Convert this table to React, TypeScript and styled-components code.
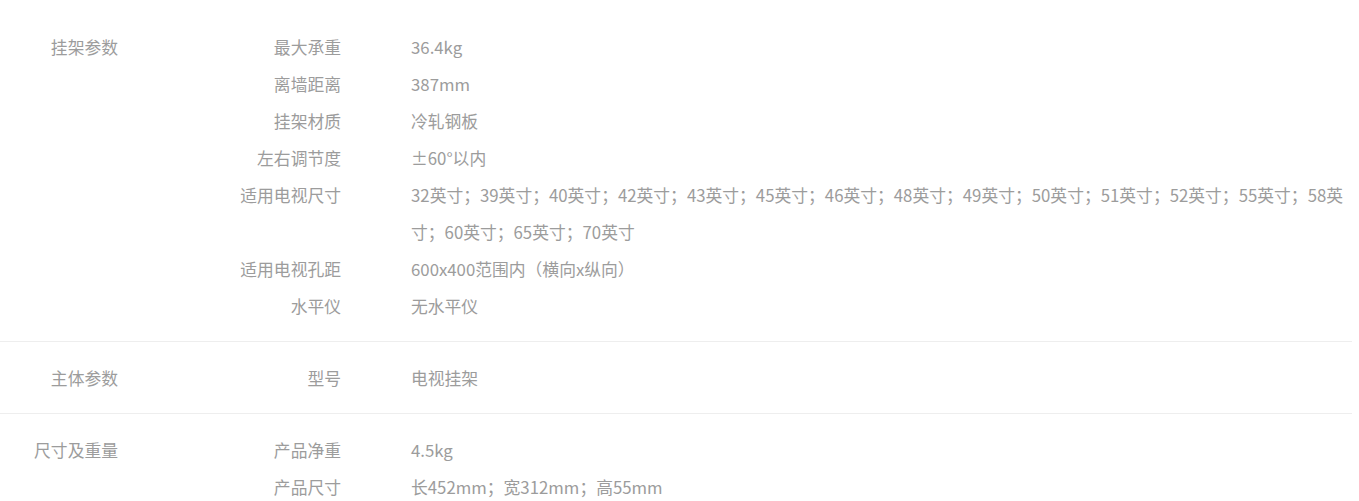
import styled, { createGlobalStyle } from "styled-components";

const GlobalStyle = createGlobalStyle`
  html, body {
    margin: 0;
    padding: 0;
    background: #fff;
  }
  body {
    font-family: "Noto Sans CJK SC", "Noto Sans", sans-serif;
  }
`;

const SpecTable = styled.div`
  width: 1352px;
  padding-top: 11px;
  color: #9c9c9c;
  font-size: 16.8px;
  line-height: 37px;
`;

const Group = styled.section`
  display: flex;
  padding: 18px 0 16px;
  border-bottom: 1px solid #eee;

  &:last-child {
    border-bottom: none;
  }
`;

const GroupTitle = styled.div`
  width: 118px;
  flex-shrink: 0;
  text-align: right;
`;

const Rows = styled.div`
  flex: 1;
  min-width: 0;
`;

const Row = styled.div`
  display: flex;
`;

const Label = styled.div`
  width: 223px;
  flex-shrink: 0;
  text-align: right;
`;

const Value = styled.div`
  flex: 1;
  min-width: 0;
  margin-left: 70px;
`;

type Spec = { label: string; value: string };
type SpecGroup = { title: string; items: Spec[] };

const groups: SpecGroup[] = [
  {
    title: "挂架参数",
    items: [
      { label: "最大承重", value: "36.4kg" },
      { label: "离墙距离", value: "387mm" },
      { label: "挂架材质", value: "冷轧钢板" },
      { label: "左右调节度", value: "±60°以内" },
      {
        label: "适用电视尺寸",
        value:
          "32英寸；39英寸；40英寸；42英寸；43英寸；45英寸；46英寸；48英寸；49英寸；50英寸；51英寸；52英寸；55英寸；58英寸；60英寸；65英寸；70英寸",
      },
      { label: "适用电视孔距", value: "600x400范围内（横向x纵向）" },
      { label: "水平仪", value: "无水平仪" },
    ],
  },
  {
    title: "主体参数",
    items: [{ label: "型号", value: "电视挂架" }],
  },
  {
    title: "尺寸及重量",
    items: [
      { label: "产品净重", value: "4.5kg" },
      { label: "产品尺寸", value: "长452mm；宽312mm；高55mm" },
    ],
  },
];

const App: React.FC = () => {
  return (
    <>
      <GlobalStyle />
      <SpecTable>
        {groups.map((g) => (
          <Group key={g.title}>
            <GroupTitle>{g.title}</GroupTitle>
            <Rows>
              {g.items.map((it) => (
                <Row key={it.label}>
                  <Label>{it.label}</Label>
                  <Value>{it.value}</Value>
                </Row>
              ))}
            </Rows>
          </Group>
        ))}
      </SpecTable>
    </>
  );
};

export default App;
